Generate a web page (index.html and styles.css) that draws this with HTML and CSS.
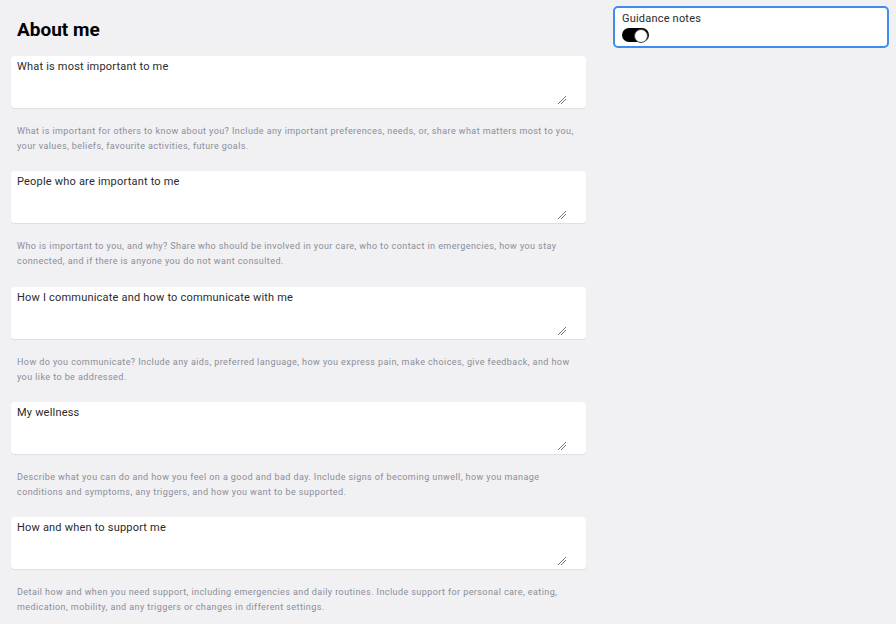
FILE: index.html
```html
<!DOCTYPE html>
<html lang="en">
<head>
    <meta charset="UTF-8">
    <meta name="viewport" content="width=device-width, initial-scale=1.0">
    <title>About me</title>
    <link rel="stylesheet" href="styles.css">
</head>
<body>
    <div class="page">
        <main class="form">
            <h1>About me</h1>

            <div class="field">
                <div class="field-box">
                    <label class="field-label">What is most important to me</label>
                    <span class="grip"></span>
                </div>
                <p class="field-help">What is important for others to know about you? Include any important preferences, needs, or, share what matters most to you, your values, beliefs, favourite activities, future goals.</p>
            </div>

            <div class="field">
                <div class="field-box">
                    <label class="field-label">People who are important to me</label>
                    <span class="grip"></span>
                </div>
                <p class="field-help">Who is important to you, and why? Share who should be involved in your care, who to contact in emergencies, how you stay connected, and if there is anyone you do not want consulted.</p>
            </div>

            <div class="field">
                <div class="field-box">
                    <label class="field-label">How I communicate and how to communicate with me</label>
                    <span class="grip"></span>
                </div>
                <p class="field-help">How do you communicate? Include any aids, preferred language, how you express pain, make choices, give feedback, and how you like to be addressed.</p>
            </div>

            <div class="field">
                <div class="field-box">
                    <label class="field-label">My wellness</label>
                    <span class="grip"></span>
                </div>
                <p class="field-help">Describe what you can do and how you feel on a good and bad day. Include signs of becoming unwell, how you manage conditions and symptoms, any triggers, and how you want to be supported.</p>
            </div>

            <div class="field">
                <div class="field-box">
                    <label class="field-label">How and when to support me</label>
                    <span class="grip"></span>
                </div>
                <p class="field-help">Detail how and when you need support, including emergencies and daily routines. Include support for personal care, eating, medication, mobility, and any triggers or changes in different settings.</p>
            </div>
        </main>

        <aside class="side">
            <div class="guidance">
                <span class="guidance-label">Guidance notes</span>
                <span class="toggle"><span class="toggle-knob"></span></span>
            </div>
        </aside>
    </div>
</body>
</html>
```

FILE: styles.css
```css
:root {
    --page-bg: #f1f0f3;
    --card-bg: #ffffff;
    --text-color: #1d1d1f;
    --help-color: #8b8e98;
    --focus-color: #3d8cf0;
}

* {
    margin: 0;
    padding: 0;
    box-sizing: border-box;
}

body {
    font-family: Roboto, "Liberation Sans", sans-serif;
    background: var(--page-bg);
    color: var(--text-color);
    min-height: 100vh;
}

.page {
    display: flex;
    align-items: flex-start;
}

.form {
    width: 586px;
    padding: 18px 0 0 11px;
}

h1 {
    font-size: 19px;
    font-weight: 700;
    color: #000;
    padding-left: 6px;
    height: 38px;
    line-height: 24px;
}

.field-box {
    position: relative;
    height: 52px;
    background: var(--card-bg);
    border-radius: 4px;
    box-shadow: 0 1px 1px rgba(0, 0, 0, 0.08);
    padding: 4px 6px;
}

.field-label {
    display: block;
    font-size: 11px;
    line-height: 14px;
    letter-spacing: 0.2px;
    color: #2a2a2c;
}

.grip {
    position: absolute;
    right: 20px;
    bottom: 4px;
    width: 8px;
    height: 8px;
    background:
        linear-gradient(135deg, transparent 45%, #777 45%, #777 55%, transparent 55%) 0 0 / 8px 8px no-repeat,
        linear-gradient(135deg, transparent 45%, #777 45%, #777 55%, transparent 55%) 3px 3px / 5px 5px no-repeat;
}

.field-help {
    font-size: 9px;
    line-height: 15px;
    letter-spacing: 0.42px;
    color: var(--help-color);
    padding: 16px 6px 17.3px;
}

.side {
    padding: 6px 0 0 27px;
}

.guidance {
    width: 276px;
    height: 42px;
    background: var(--card-bg);
    border: 2px solid var(--focus-color);
    border-radius: 5px;
    padding: 4px 7px;
    display: flex;
    flex-direction: column;
    gap: 2px;
}

.guidance-label {
    font-size: 11px;
    line-height: 14px;
    letter-spacing: 0.2px;
    color: #2a2a2c;
}

.toggle {
    position: relative;
    width: 27px;
    height: 16px;
    background: #000;
    border-radius: 8px;
}

.toggle-knob {
    position: absolute;
    top: 1px;
    right: 1px;
    width: 14px;
    height: 14px;
    background: #fff;
    border: 1px solid #444;
    border-radius: 50%;
}
```
